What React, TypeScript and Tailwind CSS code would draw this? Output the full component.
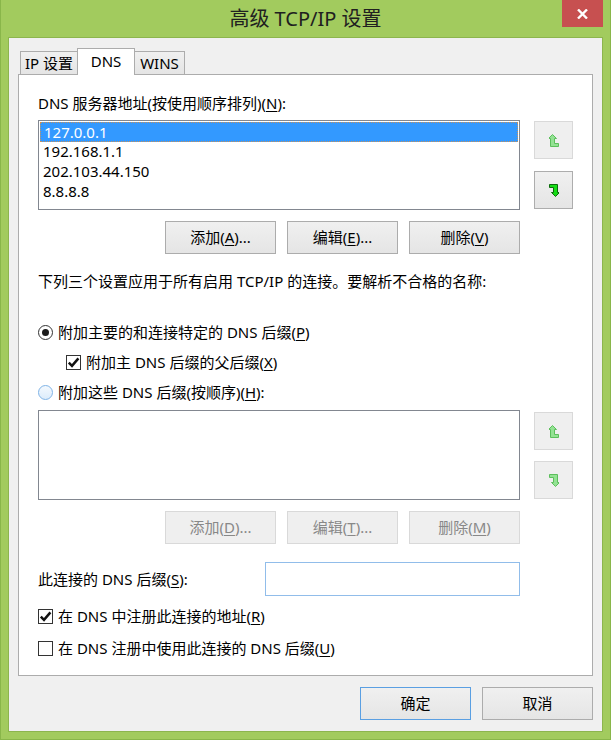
import React from "react";

const font = "font-['Noto_Sans','Noto_Sans_CJK_SC',sans-serif]";

function Key({ k }: { k: string }) {
    return <span className="underline underline-offset-[2px]">{k}</span>;
}

function WinButton({
    children,
    disabled,
    primary,
}: {
    children: React.ReactNode;
    disabled?: boolean;
    primary?: boolean;
}) {
    const look = disabled
        ? "border-[#d9d9d9] bg-[#efefef] text-[#888888]"
        : primary
        ? "border-[#5a9fe2] bg-linear-to-b from-[#f0f0f0] to-[#e5e5e5] text-black"
        : "border-[#acacac] bg-linear-to-b from-[#f0f0f0] to-[#e5e5e5] text-black";
    return (
        <div
            className={`w-[111px] h-[33px] border flex items-center justify-center leading-none ${look}`}
        >
            {children}
        </div>
    );
}

function MoveArrow({ down, enabled }: { down?: boolean; enabled?: boolean }) {
    const fill = enabled ? "#16dc16" : "#93e293";
    const stroke = enabled ? "#0b6b0b" : "#5cbf5c";
    return (
        <svg
            width="10"
            height="13"
            viewBox="0 0 10 13"
            className={down ? "rotate-180" : ""}
        >
            <path
                d="M3.5 0.5 L7.5 4.5 H5.5 V9.5 H9.5 V12.5 H1.5 V4.5 H-0.5 Z"
                fill={fill}
                stroke={stroke}
                strokeWidth="1"
                strokeLinejoin="miter"
            />
        </svg>
    );
}

function ArrowButton({ down, enabled }: { down?: boolean; enabled?: boolean }) {
    return (
        <div
            className={`w-[39px] h-[38px] border flex items-center justify-center ${
                enabled
                    ? "border-[#adadad] bg-linear-to-b from-[#f0f0f0] to-[#e5e5e5]"
                    : "border-[#d9d9d9] bg-[#efefef]"
            }`}
        >
            <MoveArrow down={down} enabled={enabled} />
        </div>
    );
}

function Radio({ checked, hover }: { checked?: boolean; hover?: boolean }) {
    return (
        <span
            className={`w-[15px] h-[15px] rounded-full border bg-white flex items-center justify-center shrink-0 ${
                hover ? "border-[#7fb3e6] bg-linear-to-b from-[#f4f9fe] to-[#dcecfb]" : "border-[#333333]"
            }`}
        >
            {checked && <span className="w-[7px] h-[7px] rounded-full bg-[#1b1b1b]" />}
        </span>
    );
}

function Check({ checked }: { checked?: boolean }) {
    return (
        <span className="w-[15px] h-[15px] border border-[#333333] bg-white flex items-center justify-center shrink-0">
            {checked && (
                <svg width="13" height="13" viewBox="0 0 13 13">
                    <path
                        d="M1.8 6.6 L5 9.8 L11.4 2.4"
                        fill="none"
                        stroke="#111"
                        strokeWidth="2.5"
                    />
                </svg>
            )}
        </span>
    );
}

function ListBox({ items }: { items: string[] }) {
    return (
        <div className="w-[482px] h-[90px] border border-[#828790] bg-white p-px flex flex-col">
            {items.map((item, i) => (
                <div
                    key={item}
                    className={`h-[20px] leading-[19px] pl-[3px] ${
                        i === 0
                            ? "bg-[#3399ff] text-white border border-dotted border-[#c8915a]"
                            : "text-black"
                    }`}
                >
                    {item}
                </div>
            ))}
        </div>
    );
}

export default function App() {
    const servers = ["127.0.0.1", "192.168.1.1", "202.103.44.150", "8.8.8.8"];

    return (
        <div
            className={`w-[611px] h-[740px] bg-[#a2cb5e] border-x border-b border-[#89b64a] flex flex-col ${font} text-[15px] text-black`}
        >
            <div className="relative h-[37px] flex items-center justify-center">
                <span className="text-[20px] leading-none text-[#202020] pt-[1px]">
                    高级 TCP/IP 设置
                </span>
                <div className="absolute right-[7px] top-0 w-[41px] h-[27px] bg-[#c75050] flex items-center justify-center">
                    <svg width="11" height="10" viewBox="0 0 11 10">
                        <path d="M1 0.5 L10 9.5 M10 0.5 L1 9.5" stroke="#fff" strokeWidth="2.4" />
                    </svg>
                </div>
            </div>

            <div className="mx-[7px] h-[695px] bg-[#f0f0f0] border border-[#8cb54e] flex flex-col px-[9px] pt-[10px]">
                {/* tabs */}
                <div className="h-[26px] flex items-end pl-[2px]">
                    <div className="w-[58px] h-[23px] border border-b-0 border-[#acacac] bg-linear-to-b from-[#f0f0f0] to-[#e5e5e5] flex items-center justify-center leading-none">
                        IP 设置
                    </div>
                    <div className="relative z-10 -ml-px -mb-px w-[58px] h-[27px] border border-b-0 border-[#acacac] bg-white flex items-center justify-center leading-none pb-[2px]">
                        DNS
                    </div>
                    <div className="-ml-px w-[51px] h-[23px] border border-b-0 border-[#acacac] bg-linear-to-b from-[#f0f0f0] to-[#e5e5e5] flex items-center justify-center leading-none">
                        WINS
                    </div>
                </div>

                <div className="h-[602px] border border-[#acacac] bg-white flex flex-col px-[19px]">
                    <div className="mt-[18px] h-[20px] leading-[20px]">
                        DNS 服务器地址(按使用顺序排列)(<Key k="N" />):
                    </div>

                    <div className="mt-[7px] flex gap-[14px]">
                        <ListBox items={servers} />
                        <div className="flex flex-col gap-[12px] mt-[1px]">
                            <ArrowButton />
                            <ArrowButton down enabled />
                        </div>
                    </div>

                    <div className="mt-[11px] w-[482px] flex justify-end gap-[11px]">
                        <WinButton>
                            添加(<Key k="A" />)...
                        </WinButton>
                        <WinButton>
                            编辑(<Key k="E" />)...
                        </WinButton>
                        <WinButton>
                            删除(<Key k="V" />)
                        </WinButton>
                    </div>

                    <div className="mt-[17px] h-[20px] leading-[20px]">
                        下列三个设置应用于所有启用 TCP/IP 的连接。要解析不合格的名称:
                    </div>

                    <div className="mt-[31px] h-[20px] flex items-center gap-[5px]">
                        <Radio checked />
                        <span className="leading-[20px]">
                            附加主要的和连接特定的 DNS 后缀(<Key k="P" />)
                        </span>
                    </div>
                    <div className="mt-[10px] h-[20px] flex items-center gap-[5px] pl-[28px]">
                        <Check checked />
                        <span className="leading-[20px]">
                            附加主 DNS 后缀的父后缀(<Key k="X" />)
                        </span>
                    </div>
                    <div className="mt-[10px] h-[20px] flex items-center gap-[5px]">
                        <Radio hover />
                        <span className="leading-[20px]">
                            附加这些 DNS 后缀(按顺序)(<Key k="H" />):
                        </span>
                    </div>

                    <div className="mt-[8px] flex gap-[14px]">
                        <div className="w-[482px] h-[90px] border border-[#828790] bg-white" />
                        <div className="flex flex-col gap-[11px] mt-[2px]">
                            <ArrowButton />
                            <ArrowButton down />
                        </div>
                    </div>

                    <div className="mt-[11px] w-[482px] flex justify-end gap-[11px]">
                        <WinButton disabled>
                            添加(<Key k="D" />)...
                        </WinButton>
                        <WinButton disabled>
                            编辑(<Key k="T" />)...
                        </WinButton>
                        <WinButton disabled>
                            删除(<Key k="M" />)
                        </WinButton>
                    </div>

                    <div className="mt-[18px] w-[482px] flex items-center justify-between">
                        <span className="leading-[20px]">
                            此连接的 DNS 后缀(<Key k="S" />):
                        </span>
                        <div className="w-[255px] h-[34px] border border-[#91bdea] bg-white" />
                    </div>

                    <div className="mt-[10px] h-[20px] flex items-center gap-[5px]">
                        <Check checked />
                        <span className="leading-[20px]">
                            在 DNS 中注册此连接的地址(<Key k="R" />)
                        </span>
                    </div>
                    <div className="mt-[12px] h-[20px] flex items-center gap-[5px]">
                        <Check />
                        <span className="leading-[20px]">
                            在 DNS 注册中使用此连接的 DNS 后缀(<Key k="U" />)
                        </span>
                    </div>
                </div>

                <div className="mt-[11px] flex justify-end gap-[11px]">
                    <WinButton primary>确定</WinButton>
                    <WinButton>取消</WinButton>
                </div>
            </div>
        </div>
    );
}
